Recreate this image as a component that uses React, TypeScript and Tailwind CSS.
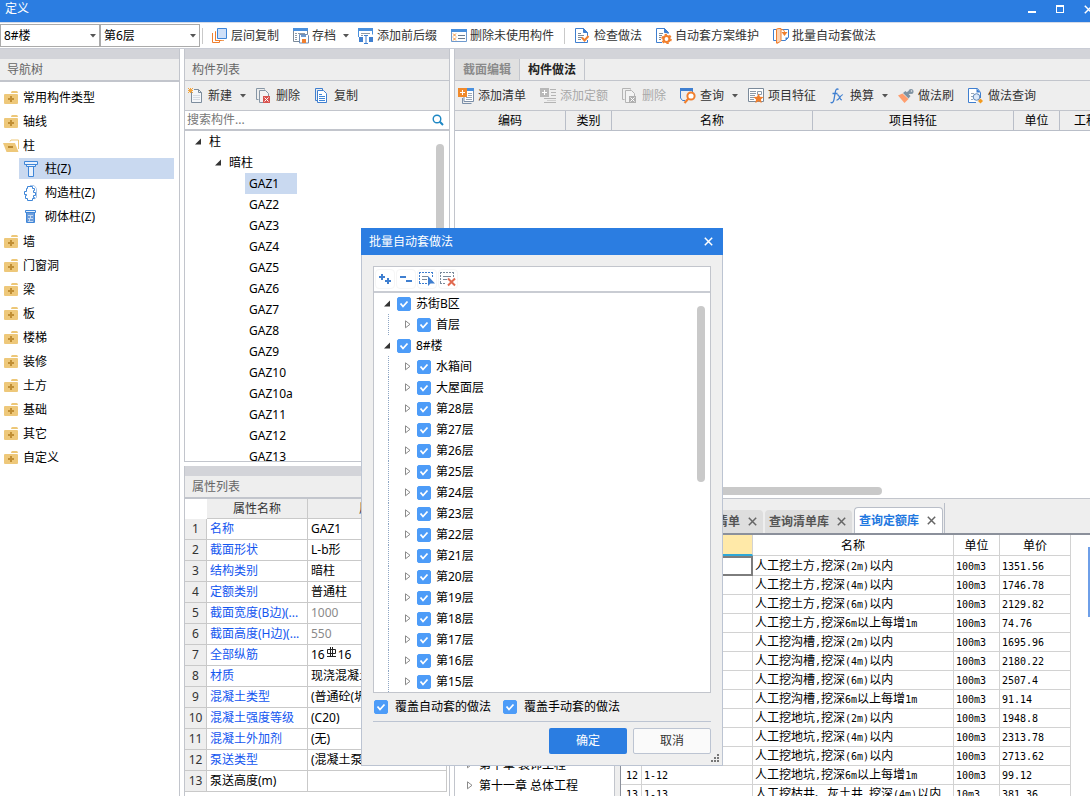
import type { ReactNode } from "react";

const NAV = ["墙", "门窗洞", "梁", "板", "楼梯", "装修", "土方", "基础", "其它", "自定义"];

const COMPONENTS = ["GAZ1", "GAZ2", "GAZ3", "GAZ4", "GAZ5", "GAZ6", "GAZ7", "GAZ8", "GAZ9", "GAZ10", "GAZ10a", "GAZ11", "GAZ12", "GAZ13"];

const PROPS = [
    { name: "名称", value: "GAZ1" },
    { name: "截面形状", value: "L-b形" },
    { name: "结构类别", value: "暗柱" },
    { name: "定额类别", value: "普通柱" },
    { name: "截面宽度(B边)(...", value: "1000", muted: true },
    { name: "截面高度(H边)(...", value: "550", muted: true },
    { name: "全部纵筋", value: "16", rebar: "16" },
    { name: "材质", value: "现浇混凝土" },
    { name: "混凝土类型", value: "(普通砼(坍落度" },
    { name: "混凝土强度等级", value: "(C20)" },
    { name: "混凝土外加剂", value: "(无)" },
    { name: "泵送类型", value: "(混凝土泵)" },
    { name: "泵送高度(m)", value: "", plain: true },
];

const QUOTAS = [
    ["人工挖土方,挖深(2m)以内", "100m3", "1351.56"],
    ["人工挖土方,挖深(4m)以内", "100m3", "1746.78"],
    ["人工挖土方,挖深(6m)以内", "100m3", "2129.82"],
    ["人工挖土方,挖深6m以上每增1m", "100m3", "74.76"],
    ["人工挖沟槽,挖深(2m)以内", "100m3", "1695.96"],
    ["人工挖沟槽,挖深(4m)以内", "100m3", "2180.22"],
    ["人工挖沟槽,挖深(6m)以内", "100m3", "2507.4"],
    ["人工挖沟槽,挖深6m以上每增1m", "100m3", "91.14"],
    ["人工挖地坑,挖深(2m)以内", "100m3", "1948.8"],
    ["人工挖地坑,挖深(4m)以内", "100m3", "2313.78"],
    ["人工挖地坑,挖深(6m)以内", "100m3", "2713.62"],
    ["人工挖地坑,挖深6m以上每增1m", "100m3", "99.12"],
    ["人工挖枯井、灰土井,挖深(4m)以内", "10m3", "381.36"],
];

const FLOORS = ["水箱间", "大屋面层", "第28层", "第27层", "第26层", "第25层", "第24层", "第23层", "第22层", "第21层", "第20层", "第19层", "第18层", "第17层", "第16层", "第15层"];

/* ---------- icons ---------- */

function Svg({ children, w = 16, h = 16 }: { children: ReactNode; w?: number; h?: number }) {
    return (
        <svg width={w} height={h} viewBox={`0 0 ${w} ${h}`} fill="none" className="shrink-0" aria-hidden="true">
            {children}
        </svg>
    );
}

const LayersIcon = () => (
    <Svg>
        <path d="M5.500 .5h9v10h-9z" fill="#cfe0f8" stroke="#3f86d8" />
        <path d="M3.500 3v9.500H12" stroke="#f0a060" />
        <path d="M.5 5v9.500H7.500V13" stroke="#f07f2e" />
        <path d="M3.500 4v8.500H9.500" stroke="#f07f2e" />
    </Svg>
);

const ArchiveIcon = () => (
    <Svg>
        <path d="M.5 1.500h14v5M.5 1.500v12H6" stroke="#7b8a9a" />
        <path d="M0 0h15v3H0z" fill="#4a90dd" />
        <path d="M2 5.500h2M5 5.500h7M2 7.500h2M2 9.500h2M2 11.500h2" stroke="#8d9aa8" />
        <path d="M6.500 6.500h8l1 1v7.500h-9z" fill="#fff" stroke="#6f8db5" />
        <path d="M8 7h5v2H8z" fill="#6f9ace" />
        <path d="M9 11h4v4H9z" fill="#f07f2e" />
    </Svg>
);

const AffixIcon = () => (
    <Svg>
        <path d="M.5 9V1.500h14v5" stroke="#4a90dd" />
        <path d="M0 0h15v3H0z" fill="#4a90dd" />
        <path d="M3 5.500h9M3 7.500h2" stroke="#8d9aa8" />
        <path d="M1 9h4v5H1zM11 9h4v5h-4z" fill="#3f7fd0" />
        <path d="M6 7.500h4M8 7v8M6 15.500h4" stroke="#3f7fd0" />
    </Svg>
);

const UnusedIcon = () => (
    <Svg>
        <path d="M.5 1.500h15v12H.5z" fill="#fff" stroke="#6f9ace" />
        <path d="M0 1h16v3H0z" fill="#4a90dd" />
        <path d="M2 5.500l3 3m0-3l-3 3M2 9.500l3 3m0-3l-3 3" stroke="#f0923a" />
        <path d="M7 7.500h7M7 10.500h7" stroke="#6b7c90" />
    </Svg>
);

const CheckDocIcon = () => (
    <Svg>
        <path d="M12.500 12v2.500H.5V.5h8l4 4V8" fill="#fff" stroke="#3f7fd0" />
        <path d="M8.500.5v4h4z" fill="#3f7fd0" stroke="#3f7fd0" />
        <path d="M3 5.500h3M3 7.500h6M3 9.500h4M3 11.500h3" stroke="#7b8a9a" />
        <path d="M7 9.500l2.500 3 4-4.500" stroke="#f07f2e" strokeWidth="2" />
    </Svg>
);

const GearDocIcon = () => (
    <Svg>
        <path d="M6 14.500H.5V.5h8l3.500 3.500v2" fill="#fff" stroke="#3f7fd0" />
        <path d="M8.500.5v4h4z" fill="#3f7fd0" stroke="#3f7fd0" />
        <path d="M3 5.500h4M3 7.500h3M3 9.500h2M3 11.500h2" stroke="#7b8a9a" />
        <circle cx="10.500" cy="11" r="3" fill="#fff" stroke="#f07f2e" strokeWidth="2.200" />
        <circle cx="10.500" cy="11" r="4.500" stroke="#f07f2e" strokeWidth="1.600" strokeDasharray="2.300 2.410" />
    </Svg>
);

const BatchIcon = () => (
    <Svg>
        <path d="M3 1.500H.5v11H3M8 1.500h7.500v8l-3 3H8" stroke="#3f7fd0" />
        <path d="M15.500 9.500l-3 3v-3z" fill="#3f7fd0" />
        <path d="M3.500 1v14M3.500 15h1.500M6 .5v14" stroke="#f07f2e" />
        <path d="M3.500 1L6 .5h2v12l-2 2-2.500.5z" fill="#fbd3b4" stroke="#f07f2e" />
        <path d="M8 1.500c2.500 0 3.500 1 3.500 3" stroke="#f07f2e" />
        <path d="M8.500 4h6l-3 4z" fill="#f07f2e" />
    </Svg>
);

const NewDocIcon = () => (
    <Svg>
        <path d="M3.500 4v10.500h10V4.500l-3-3H6" fill="#f4f6f9" stroke="#7d8d9d" />
        <path d="M10.500 1.500v3h3" stroke="#7d8d9d" />
        <path d="M5 7.500h7M5 9.500h7M5 11.500h7" stroke="#d5dae2" />
        <path d="M0 0l5 5M5 0L0 5M0 2.500h5M2.500 0v5" stroke="#f2a33c" />
    </Svg>
);

const DeleteDocIcon = ({ off = false }: { off?: boolean }) => (
    <Svg>
        <path d="M2.500 11.500H.5V.5h8v1" stroke={off ? "#b4b4b4" : "#8796a5"} />
        <path d="M7 14.500H3.500v-12h6l3 3V8" fill="#f3f3f3" stroke={off ? "#b4b4b4" : "#8796a5"} />
        <path d="M7 8h7v7H7z" fill={off ? "#b0b0b0" : "#d9534f"} />
        <path d="M8.500 9.500l4 4m0-4l-4 4" stroke="#fff" />
    </Svg>
);

const CopyDocIcon = () => (
    <Svg>
        <path d="M3 12.500H1.500V.5h7V2" stroke="#3f7fd0" />
        <path d="M3.500 2.500h6l3 3v9h-9z" fill="#fff" stroke="#3f7fd0" />
        <path d="M5 6.500h3M5 8.500h6M5 10.500h6M5 12.500h6" stroke="#3f86d8" />
    </Svg>
);

const AddListIcon = () => (
    <Svg>
        <path d="M9 1.500h6.500v12H6V9" fill="#fff" stroke="#7b8fa8" />
        <path d="M9 0h7v3H9z" fill="#4a90dd" />
        <path d="M10 5.500h4M10 7.500h4M8 9.500h6M8 11.500h6" stroke="#9aa8b8" />
        <path d="M4.500 10v5.500h9" stroke="#7b8fa8" />
        <path d="M0 0h9v9H0z" fill="#f08a2c" />
        <path d="M4.500 2v5M2 4.500h5" stroke="#fff" />
    </Svg>
);

const AddQuotaIcon = () => (
    <Svg>
        <path d="M0 0h9v9H0z" fill="#b8b8b8" />
        <path d="M4.500 2v5M2 4.500h5" stroke="#fff" />
        <path d="M10 1.500h6M11 4.500h5M11 7.500h5M4 10.500h12M4 14.500h12" stroke="#b4b4b4" />
        <path d="M7 12.500h9" stroke="#cfcfcf" />
    </Svg>
);

const QueryIcon = () => (
    <Svg>
        <path d="M5 12.500H2.500L.5 10V1.500h12V4" stroke="#3f7fd0" />
        <path d="M0 0h13v3H0z" fill="#3f7fd0" />
        <circle cx="11" cy="8" r="3.600" fill="#fff" stroke="#f07f2e" strokeWidth="2" />
        <path d="M8.500 10.500L4.500 15" stroke="#f07f2e" strokeWidth="2.200" />
    </Svg>
);

const FeatureIcon = () => (
    <Svg>
        <path d="M.5 .5h15v13H.5z" fill="#fff" stroke="#7b8a9a" />
        <path d="M2 3.500h6M2 5.500h6M2 7.500h5M2 9.500h5M2 11.500h4M9.500 3.500h4v3h-4z" stroke="#8d9aa8" />
        <path d="M10.500 5.500l1.500 3.200 3.600.4-2.700 2.400.8 3.500-3.200-1.800L7.300 15l.8-3.500-2.700-2.400 3.600-.4z" fill="#f07f2e" />
    </Svg>
);

const FxIcon = () => (
    <Svg>
        <path d="M8.500 1.600C6.900.2 5.800 1.400 5.300 4L4 11.500C3.500 14.300 2.300 15.400.6 14.300M2.500 5.500h5" stroke="#3f7fd0" strokeWidth="1.300" />
        <path d="M7 7c2.500-1.500 2 5 5 5M13 6.800C10.500 6 9.500 12.600 6.500 12" stroke="#3f7fd0" strokeWidth="1.200" />
    </Svg>
);

const BrushIcon = () => (
    <Svg>
        <path d="M5 5l2.500-2 5 5-2 2.500z" fill="#7f93a3" />
        <path d="M9 5.500l3-1.500" stroke="#7f93a3" strokeWidth="3" />
        <circle cx="13" cy="3.500" r="2.500" fill="#7f93a3" />
        <circle cx="13.500" cy="3" r=".8" fill="#eee" />
        <path d="M0 7.500l4.500-2 6 5.500L6.500 15z" fill="#ff9e6e" />
    </Svg>
);

const DocSearchIcon = () => (
    <Svg>
        <path d="M8 14.500H.5V.5h9l3 4V10" fill="#fff" stroke="#3f7fd0" />
        <path d="M8.500.5v4h4z" fill="#3f7fd0" />
        <path d="M3 5.500h3M3 8.500h2M3 11.500h2" stroke="#9aa8b8" />
        <circle cx="8.500" cy="9" r="3.300" fill="#dce9f9" stroke="#5f86b8" />
        <path d="M12.500 10.500l2.500 2.500-2.500 2.500-2.500-2.500z" fill="#f39a1e" />
    </Svg>
);

const FolderIcon = () => (
    <Svg w={14} h={14}>
        <path d="M7 2q0-2 1.500-2h4Q14 0 14 2z" fill="#edc777" />
        <path d="M0 4q0-1 1-1h12q1 0 1 1v8q0 1-1 1H1q-1 0-1-1z" fill="#eec87a" />
        <path d="M7 5v6M4 8h6" stroke="#c18f35" strokeWidth="2" />
    </Svg>
);

const FolderOpenIcon = () => (
    <Svg w={16} h={14}>
        <path d="M7 2.500L8 1h7.500v9" stroke="#edc777" />
        <path d="M0 4h12l3.500 9H3.500z" fill="#eec87a" />
        <path d="M5 8h5" stroke="#b98830" strokeWidth="2" />
    </Svg>
);

const ColumnIcon = () => (
    <Svg>
        <path d="M5.500 5.500h5v10h-5z" fill="#eaf2fc" stroke="#3f86d8" />
        <path d="M3.500 3.500h9v2h-9z" fill="#eaf2fc" stroke="#3f86d8" />
        <path d="M1.500 .5h13v3h-13z" fill="#eaf2fc" stroke="#3f86d8" />
    </Svg>
);

const StructColumnIcon = () => (
    <Svg>
        <path d="M7 .5h4l2.500 3v9l-2 1.500" stroke="#a9c6ea" />
        <path d="M4.500 1.500h5v2h2v2h-1v2h2v3h-2v2h1v1h-2v2h-5v-2h-2v-3h1v-1h-2v-3h2v-3h1z" fill="#fff" stroke="#3f86d8" />
    </Svg>
);

const MasonryIcon = () => (
    <Svg>
        <path d="M2.500 1.500h10v2h-10z" fill="#eaf2fc" stroke="#3f86d8" />
        <path d="M4 4h7v10H4z" fill="#6d9ddb" />
        <path d="M5 6.500h5M5 9.500h5M5 12.500h5M7.500 7v2M6.500 10v2" stroke="#c3d8f2" />
        <path d="M3.500 4v9.500h8V4" stroke="#3f86d8" />
    </Svg>
);

const Caret = () => (
    <svg width="6" height="4" viewBox="0 0 6 4" className="shrink-0" aria-hidden="true">
        <path d="M0 0h6L3 3.500z" fill="#555" />
    </svg>
);

const OpenArrow = () => (
    <svg width="7" height="7" viewBox="0 0 7 7" className="shrink-0" aria-hidden="true">
        <path d="M6 .5v6H0z" fill="#333" />
    </svg>
);

const ClosedArrow = () => (
    <svg width="6" height="9" viewBox="0 0 6 9" className="shrink-0" aria-hidden="true">
        <path d="M.5 .8v7l4.500-3.500z" fill="#fff" stroke="#8a8a8a" />
    </svg>
);

const Cross = ({ className }: { className: string }) => (
    <svg width="9" height="9" viewBox="0 0 9 9" className={className} aria-hidden="true">
        <path d="M.8 .8l7.400 7.400M8.200 .8L.8 8.200" stroke="currentColor" strokeWidth="1.500" />
    </svg>
);

/* ---------- small parts ---------- */

function TopButton({ icon, label, menu }: { icon: ReactNode; label: string; menu?: boolean }) {
    return (
        <button className={`flex h-5 shrink-0 items-center gap-[3px] rounded-sm pl-[5px] whitespace-nowrap text-[#333] ${menu ? "" : "pr-[5px]"}`}>
            {icon}
            {label}
            {menu && <span className="pl-1"><Caret /></span>}
        </button>
    );
}

function ToolButton({ icon, label, menu, off }: { icon: ReactNode; label: string; menu?: boolean; off?: boolean }) {
    return (
        <button disabled={off} className={`flex shrink-0 items-center gap-1 pl-[3px] whitespace-nowrap ${menu ? "pr-[7px]" : "pr-[11px]"} ${off ? "text-[#a8a8a8]" : "text-[#333]"}`}>
            {icon}
            {label}
            {menu && <span className="pl-1"><Caret /></span>}
        </button>
    );
}

function Picker({ label, value }: { label: string; value: string }) {
    return (
        <div className="relative h-[23px] w-[100px] shrink-0">
            <select aria-label={label} className="h-full w-full appearance-none border border-[#ababab] bg-white pl-[3px] text-black outline-none">
                <option>{value}</option>
            </select>
            <span className="pointer-events-none absolute top-[10px] right-1"><Caret /></span>
        </div>
    );
}

function Check({ label, gap = "gap-[5px]" }: { label: string; gap?: string }) {
    return (
        <label className={`flex items-center whitespace-nowrap ${gap}`}>
            <span className="relative block size-[14px]">
                <input type="checkbox" defaultChecked className="peer block size-[14px] appearance-none rounded-xs border border-[#4d9cf8] bg-white checked:bg-[#4d9cf8]" />
                <svg width="14" height="14" viewBox="0 0 14 14" fill="none" className="pointer-events-none absolute inset-0 hidden peer-checked:block" aria-hidden="true">
                    <path d="M3.500 6.500l2.500 3 4.500-5" stroke="#fff" strokeWidth="1.800" />
                </svg>
            </span>
            {label}
        </label>
    );
}

// CJK runs at 12px, latin runs at half that advance
function Grid({ text }: { text: string }) {
    return (
        <>
            {text.split(/([\x20-\x7e]+)/).map((part, i) =>
                i % 2 ? <span key={i} className="font-['DejaVu_Sans_Mono',monospace] text-[10px]">{part}</span> : part
            )}
        </>
    );
}

function PanelTitle({ children, thick }: { children: ReactNode; thick?: boolean }) {
    return (
        <>
            <div className="h-[10px] shrink-0 bg-[#d3d4d9]" />
            <h2 className={`flex shrink-0 items-center border-[#c2c5cc] bg-[#eee] pl-[7px] text-[#666] ${thick ? "h-[23px] border-b-2" : "h-[22px] border-b"}`}>{children}</h2>
        </>
    );
}

/* ---------- panels ---------- */

function NavPanel() {
    const folder = (name: string) => (
        <li key={name} className="flex h-6 items-center gap-[5px] pl-1">
            <FolderIcon />
            {name}
        </li>
    );
    return (
        <nav className="flex w-[180px] shrink-0 flex-col overflow-hidden border-r border-[#c2c5cc]">
            <PanelTitle thick>导航树</PanelTitle>
            <ul className="pt-1">
                {["常用构件类型", "轴线"].map(folder)}
                <li className="pl-[3px]">
                    <div className="flex h-6 items-center gap-1"><FolderOpenIcon />柱</div>
                    <ul className="pr-[5px] pl-4">
                        <li className="pb-[3px]"><a href="#z" className="flex h-[21px] items-center gap-[6px] bg-[#c9d9f0] pl-1"><ColumnIcon />柱(Z)</a></li>
                        <li className="pb-[3px]"><a href="#gz" className="flex h-[21px] items-center gap-[6px] pl-1"><StructColumnIcon />构造柱(Z)</a></li>
                        <li className="pb-[3px]"><a href="#qt" className="flex h-[21px] items-center gap-[6px] pl-1"><MasonryIcon />砌体柱(Z)</a></li>
                    </ul>
                </li>
                {NAV.map(folder)}
            </ul>
        </nav>
    );
}

function ComponentList() {
    return (
        <section className="flex min-h-0 flex-1 flex-col border-x border-b border-[#c2c5cc]">
            <PanelTitle>构件列表</PanelTitle>
            <div className="flex h-[30px] shrink-0 border-b border-[#c2c5cc] bg-[#eee]">
                <ToolButton icon={<NewDocIcon />} label="新建" menu />
                <ToolButton icon={<DeleteDocIcon />} label="删除" />
                <ToolButton icon={<CopyDocIcon />} label="复制" />
            </div>
            <label className="flex h-5 shrink-0 items-center border-b-2 border-[#c2c5cc] pr-[5px] pl-[2px]">
                <input type="text" aria-label="搜索构件" placeholder="搜索构件..." className="min-w-0 flex-1 outline-none placeholder:text-[#777]" />
                <Svg w={12} h={12}>
                    <circle cx="5" cy="5" r="3.800" stroke="#1d87c4" strokeWidth="1.400" />
                    <path d="M7.800 7.800l3.200 3.200" stroke="#1d87c4" strokeWidth="2" />
                </Svg>
            </label>
            <div className="flex min-h-0 flex-1 overflow-hidden">
                <ul className="flex-1">
                    <li className="flex h-[21px] items-center gap-[7px] pl-[10px]"><OpenArrow />柱</li>
                    <li className="flex h-[21px] items-center gap-[7px] pl-[30px]"><OpenArrow />暗柱</li>
                    {COMPONENTS.map((name, i) => (
                        <li key={name} className="flex h-[21px] pl-[60px]">
                            <span className={`flex w-[52px] items-center pl-1 ${i === 0 ? "bg-[#c9d9f0]" : ""}`}>{name}</span>
                        </li>
                    ))}
                </ul>
                <div className="mt-[13px] mr-[5px] h-[200px] w-2 rounded-full bg-[#c9c9c9]" />
            </div>
        </section>
    );
}

function PropertyList() {
    const line = "border-r border-b border-[#c9c9c9] p-0";
    return (
        <section className="flex h-[330px] shrink-0 flex-col overflow-hidden border-x border-[#c2c5cc]">
            <PanelTitle thick>属性列表</PanelTitle>
            <div className="pr-[2px]">
                <table className="w-full table-fixed border-separate border-spacing-0">
                    <thead>
                        <tr className="h-5 bg-[#eee] text-[#333]">
                            <th className="w-[22px] border-r border-b border-white bg-white p-0" />
                            <th className={`w-[101px] font-normal ${line}`}>属性名称</th>
                            <th className={`font-normal ${line}`}>属性值</th>
                        </tr>
                    </thead>
                    <tbody>
                        {PROPS.map((p, i) => (
                            <tr key={i} className="h-[21px]">
                                <td className={`bg-[#eee] text-center text-[#333] ${line}`}>{i + 1}</td>
                                <td className={`truncate pl-[3px]! ${line} ${p.plain ? "text-black" : "text-[#1356f0]"}`}>{p.name}</td>
                                <td className={`truncate pl-[3px]! ${line} ${p.muted ? "text-[#8a8a8a]" : "text-black"}`}>
                                    {p.value}
                                    {p.rebar && (
                                        <>
                                            <svg width="11" height="11" viewBox="0 0 11 11" fill="none" className="mx-px inline-block align-[1px]" aria-hidden="true">
                                                <path d="M4.500 0v10M6.500 0v10M1.500 2.500h8v4h-8zM1 9.500h9" stroke="#222" />
                                            </svg>
                                            {p.rebar}
                                        </>
                                    )}
                                </td>
                            </tr>
                        ))}
                    </tbody>
                </table>
            </div>
        </section>
    );
}

function MethodPanel() {
    const head = "border-r border-b border-[#b9bec8] p-0 pt-px font-normal";
    return (
        <section className="flex min-h-0 flex-1 flex-col border-l border-[#c2c5cc]">
            <div className="h-[10px] shrink-0 bg-[#d3d4d9]" />
            <div className="flex h-[22px] shrink-0 border-b border-[#c2c5cc] bg-[#eee]">
                <button className="w-[65px] border-r border-[#c2c5cc] bg-[#e0e0e0] font-bold text-[#8a8a8a]">截面编辑</button>
                <button className="w-[65px] border-r border-[#c2c5cc] font-bold text-[#222]">构件做法</button>
            </div>
            <div className="flex h-[30px] shrink-0 overflow-hidden border-b border-[#c2c5cc] bg-[#eee]">
                <ToolButton icon={<AddListIcon />} label="添加清单" />
                <ToolButton icon={<AddQuotaIcon />} label="添加定额" off />
                <ToolButton icon={<DeleteDocIcon off />} label="删除" off />
                <ToolButton icon={<QueryIcon />} label="查询" menu />
                <ToolButton icon={<FeatureIcon />} label="项目特征" />
                <ToolButton icon={<FxIcon />} label="换算" menu />
                <ToolButton icon={<BrushIcon />} label="做法刷" />
                <ToolButton icon={<DocSearchIcon />} label="做法查询" />
            </div>
            <div className="min-h-0 flex-1 overflow-hidden">
                <table className="w-[670px] table-fixed border-separate border-spacing-0">
                    <thead>
                        <tr className="h-5 bg-[#eee]">
                            <th className={`w-[111px] ${head}`}>编码</th>
                            <th className={`w-[46px] ${head}`}>类别</th>
                            <th className={`w-[201px] ${head}`}>名称</th>
                            <th className={`w-[201px] ${head}`}>项目特征</th>
                            <th className={`w-[46px] ${head}`}>单位</th>
                            <th className={head}>工程量</th>
                        </tr>
                    </thead>
                </table>
            </div>
            <div className="mb-[3px] ml-3 h-2 w-[415px] shrink-0 rounded-full bg-[#c9c9c9]" />
        </section>
    );
}

function QueryTab({ label, active }: { label: string; active?: boolean }) {
    return (
        <button
            className={`flex shrink-0 items-center gap-2 rounded-t-sm font-bold whitespace-nowrap ${
                active ? "h-[26px] border border-b-0 border-[#b9bec8] bg-white pr-[6px] pl-1 text-[#1f78e0]" : "mr-[2px] h-[23px] bg-[#dedede] pr-[6px] pl-1 text-[#555]"
            }`}
        >
            {label}
            <Cross className="text-[#666]" />
        </button>
    );
}

function QuotaPanel() {
    const cell = "border-r border-b border-[#d2d2d2] p-0 pt-px pl-[2px] whitespace-nowrap overflow-hidden";
    const head = "border-r border-b border-[#d2d2d2] p-0 pt-px font-normal";
    return (
        <section className="flex h-[298px] shrink-0 flex-col overflow-hidden border-t border-l border-[#c2c5cc]">
            <div className="flex h-9 shrink-0 items-end border-b-2 border-[#8b909b] bg-[#eee] pl-[209px]">
                <QueryTab label="查询匹配清单" />
                <QueryTab label="查询清单库" />
                <QueryTab label="查询定额库" active />
                <div className="h-[30px] w-[2px] border-r border-[#b9bec8]" />
            </div>
            <div className="flex min-h-0 flex-1">
                <ul className="flex w-40 shrink-0 flex-col justify-end border-r border-[#c2c5cc]">
                    {["第十章 装饰工程", "第十一章 总体工程"].map((name) => (
                        <li key={name} className="flex h-[21px] items-center gap-[6px] pl-3 whitespace-nowrap"><ClosedArrow />{name}</li>
                    ))}
                </ul>
                <div className="w-[5px] shrink-0 bg-[#eee]" />
                <div className="min-w-0 flex-1 border-l border-[#8b909b]">
                    <table className="w-[450px] table-fixed border-separate border-spacing-0">
                        <thead>
                            <tr className="h-[21px]">
                                <th className={`w-[21px] ${head}`} />
                                <th className="w-[111px] border-r border-b-2 border-r-[#d2d2d2] border-b-[#2fa8d8] bg-[#ffe9a8] p-0 font-normal">编码</th>
                                <th className={`w-[201px] ${head}`}>名称</th>
                                <th className={`w-[46px] ${head}`}>单位</th>
                                <th className={head}>单价</th>
                            </tr>
                        </thead>
                        <tbody>
                            {QUOTAS.map(([name, unit, price], i) => (
                                <tr key={i} className="h-[19px]">
                                    <td className={`text-center ${cell}`}><Grid text={`${i + 1}`} /></td>
                                    <td className={i === 0 ? "border-2 border-[#7d7d7d] p-0 leading-[15px]" : cell}><Grid text={`1-${i + 1}`} /></td>
                                    <td className={cell}><Grid text={name} /></td>
                                    <td className={cell}><Grid text={unit} /></td>
                                    <td className={cell}><Grid text={price} /></td>
                                </tr>
                            ))}
                        </tbody>
                    </table>
                </div>
                <div className="mt-3 h-[70px] w-[2px] shrink-0 bg-[#6e9fe8]" />
            </div>
        </section>
    );
}

function BatchDialog() {
    const tool = "flex size-5 items-center justify-center rounded-sm border border-[#f6f6f6]";
    return (
        <div role="dialog" aria-label="批量自动套做法" className="absolute top-[228px] left-[361px] flex w-[362px] flex-col border border-t-0 border-[#bcc4d2] bg-[#efefef]">
            <header className="-mx-px flex h-[27px] items-center justify-between bg-[#2b7de1] pr-[10px] pl-2 text-white">
                批量自动套做法
                <button aria-label="关闭"><Cross className="text-white" /></button>
            </header>
            <div className="mx-[11px] mt-[11px] border border-[#c2c5cc] bg-white">
                <div className="flex h-[26px] items-center gap-px border-b-2 border-[#c9ccd3] pl-px">
                    <button aria-label="全部展开" className={tool}>
                        <Svg w={14} h={14}><path d="M1 5h6M4 2v6M7 9h6M10 6v6" stroke="#3f7fd0" strokeWidth="2" /></Svg>
                    </button>
                    <button aria-label="全部折叠" className={tool}>
                        <Svg w={14} h={14}><path d="M1 5h6M7 9h6" stroke="#3f7fd0" strokeWidth="2" /></Svg>
                    </button>
                    <button aria-label="全选" className={tool}>
                        <Svg>
                            <path d="M0 1.500h14M0 12.500h9M.5 1v12M13.500 1v5" stroke="#3f7fd0" strokeDasharray="2 1" />
                            <path d="M3 5.500h6M3 8.500h5" stroke="#7b8a9a" />
                            <path d="M9 5v10l2.500-2.500H16z" fill="#3f7fd0" />
                        </Svg>
                    </button>
                    <button aria-label="取消全选" className={tool}>
                        <Svg>
                            <path d="M0 1.500h14M0 12.500h6M.5 1v12M13.500 1v5" stroke="#7b8a9a" strokeDasharray="2 1" />
                            <path d="M3 5.500h8M3 8.500h4" stroke="#7b8a9a" />
                            <path d="M8 7.500l7 7M15 7.500l-7 7" stroke="#e0694f" strokeWidth="2" />
                        </Svg>
                    </button>
                </div>
                <div className="flex">
                    <ul className="flex-1">
                        <li className="flex h-[21px] items-center gap-[6px] pl-[10px]"><OpenArrow /><Check label="苏街B区" /></li>
                        <li className="ml-[14px] flex h-[21px] items-center gap-[6px] border-l border-dotted border-[#8fa6c4] pl-4"><ClosedArrow /><Check label="首层" /></li>
                        <li className="flex h-[21px] items-center gap-[6px] pl-[10px]"><OpenArrow /><Check label="8#楼" /></li>
                        {FLOORS.map((f) => (
                            <li key={f} className="ml-[14px] flex h-[21px] items-center gap-[6px] border-l border-dotted border-[#8fa6c4] pl-4"><ClosedArrow /><Check label={f} /></li>
                        ))}
                    </ul>
                    <div className="mt-[13px] mr-[5px] h-[176px] w-2 rounded-full bg-[#c9c9c9]" />
                </div>
            </div>
            <div className="mx-[11px] flex h-[29px] items-center gap-3 border-b border-[#bcc4d2] pl-px">
                <Check label="覆盖自动套的做法" gap="gap-[7px]" />
                <Check label="覆盖手动套的做法" gap="gap-[7px]" />
            </div>
            <div className="flex justify-end gap-[6px] px-[11px] pt-[6px] pb-[11px]">
                <button className="h-[26px] w-[78px] rounded-xs bg-[#2b7de1] text-white">确定</button>
                <button className="h-[26px] w-[78px] rounded-xs border border-[#bcc4d2] bg-[#fafafa] text-[#333]">取消</button>
            </div>
            <svg width="8" height="8" viewBox="0 0 8 8" className="absolute right-[3px] bottom-[3px]" aria-hidden="true">
                <path d="M6 0h2v2H6zM3 3h2v2H3zM6 3h2v2H6zM0 6h2v2H0zM3 6h2v2H3zM6 6h2v2H6z" fill="#777" />
            </svg>
        </div>
    );
}

export default function App() {
    return (
        <div className="relative flex h-screen flex-col overflow-hidden bg-white font-['Noto_Sans','Noto_Sans_CJK_SC',sans-serif] text-[12px] leading-4 text-black">
            <header className="flex h-[22px] shrink-0 items-center justify-between bg-[#2b7de1] pb-1 pl-[5px] text-white">
                <h1>定义</h1>
                <div className="flex items-center gap-5">
                    <button aria-label="最小化"><svg width="8" height="8" viewBox="0 0 8 8"><path d="M0 6h8v2H0z" fill="#fff" /></svg></button>
                    <button aria-label="最大化"><svg width="8" height="8" viewBox="0 0 8 8" fill="none"><path d="M.5 0v8M7.500 0v8M0 7.500h8" stroke="#fff" /><path d="M0 0h8v2H0z" fill="#fff" /></svg></button>
                    <button aria-label="关闭" className="-mr-[3px]"><Cross className="text-white" /></button>
                </div>
            </header>
            <div className="flex h-[27px] shrink-0 items-center overflow-hidden border-y border-t-[#d5dbe8] border-b-[#c9ccd5]">
                <Picker label="楼栋" value="8#楼" />
                <Picker label="楼层" value="第6层" />
                <div className="mr-1 ml-[2px] h-4 w-px shrink-0 bg-[#c9c9c9]" />
                <div className="flex gap-1">
                    <TopButton icon={<LayersIcon />} label="层间复制" />
                    <TopButton icon={<ArchiveIcon />} label="存档" menu />
                    <TopButton icon={<AffixIcon />} label="添加前后缀" />
                    <TopButton icon={<UnusedIcon />} label="删除未使用构件" />
                </div>
                <div className="mx-[5px] h-4 w-px shrink-0 bg-[#c9c9c9]" />
                <div className="flex gap-1">
                    <TopButton icon={<CheckDocIcon />} label="检查做法" />
                    <TopButton icon={<GearDocIcon />} label="自动套方案维护" />
                    <TopButton icon={<BatchIcon />} label="批量自动套做法" />
                </div>
            </div>
            <main className="flex min-h-0 flex-1 gap-1">
                <NavPanel />
                <div className="flex w-[266px] shrink-0 flex-col gap-1">
                    <ComponentList />
                    <PropertyList />
                </div>
                <div className="flex min-w-0 flex-1 flex-col">
                    <MethodPanel />
                    <QuotaPanel />
                </div>
            </main>
            <BatchDialog />
        </div>
    );
}
